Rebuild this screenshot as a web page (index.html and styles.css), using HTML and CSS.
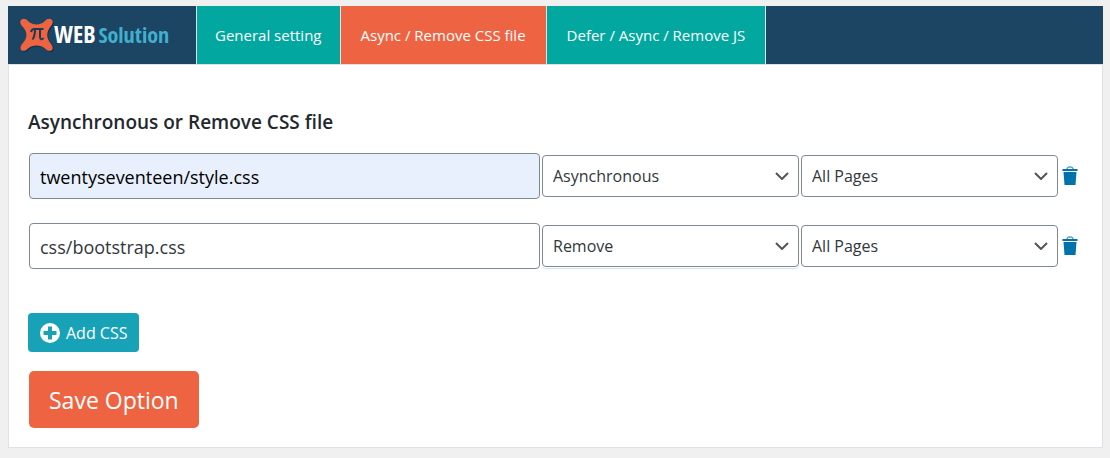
FILE: index.html
```html
<!DOCTYPE html>
<html lang="en">
<head>
<meta charset="utf-8">
<title>Async / Remove CSS file</title>
<link rel="stylesheet" href="styles.css">
</head>
<body>
<header class="topbar">
  <a class="logo" href="#" aria-label="PI WEB Solution">
    <svg class="logo-mark" viewBox="0 0 34 34" aria-hidden="true">
      <path class="logo-shadow" transform="translate(1 1)" d="M1 2C3 0 6 .5 8 3C12 7.500 21 7.500 25 3C27 .5 30 0 32 2C33.500 4 32.500 6 31 8C26 14 26 20 31 26C32.500 28 33.500 30 32 32C30 33.500 27 33 25 30.500C21 26.500 12 26.500 8 30.500C6 33 3 33.500 1 32C0 30 .5 28 2 26C8 20 8 14 2 8C.5 6 -.5 4 1 2Z"/>
      <path class="logo-star" d="M1 2C3 0 6 .5 8 3C12 7.500 21 7.500 25 3C27 .5 30 0 32 2C33.500 4 32.500 6 31 8C26 14 26 20 31 26C32.500 28 33.500 30 32 32C30 33.500 27 33 25 30.500C21 26.500 12 26.500 8 30.500C6 33 3 33.500 1 32C0 30 .5 28 2 26C8 20 8 14 2 8C.5 6 -.5 4 1 2Z"/>
      <path class="logo-pi" d="M11 14C11.500 11.500 12.500 11 14.500 11H23.500M15 11C15 16 14.500 19 12.500 21.500M20 11V19C20 21.500 22 22 23.500 20"/>
    </svg>
    <span class="logo-name"><span class="logo-web">WEB</span><span class="logo-solution">Solution</span></span>
  </a>
  <nav class="tabs">
    <a class="tab" href="#">General setting</a>
    <a class="tab tab-active" href="#" aria-current="page">Async / Remove CSS file</a>
    <a class="tab" href="#">Defer / Async / Remove JS</a>
  </nav>
</header>
<main class="panel">
  <form class="form">
    <h1 class="title">Asynchronous or Remove CSS file</h1>
    <div class="rule">
      <input class="field file autofilled" type="text" value="twentyseventeen/style.css" aria-label="CSS file">
      <select class="field choice" aria-label="Action"><option selected>Asynchronous</option><option>Remove</option></select>
      <select class="field choice" aria-label="Pages"><option>All Pages</option></select>
      <button class="delete" type="button" aria-label="Delete rule">
        <svg viewBox="0 0 16 20" width="16" height="20" aria-hidden="true"><path class="bin-handle" d="M5 3C5 1 6.500 1 8 1S11 1 11 3"/><path class="bin-body" d="M0.500 3H15.500V5H0.500ZM1.500 6H14.500L13.500 19H2.500Z"/></svg>
      </button>
    </div>
    <div class="rule">
      <input class="field file" type="text" value="css/bootstrap.css" aria-label="CSS file">
      <select class="field choice focused" aria-label="Action"><option>Asynchronous</option><option selected>Remove</option></select>
      <select class="field choice" aria-label="Pages"><option>All Pages</option></select>
      <button class="delete" type="button" aria-label="Delete rule">
        <svg viewBox="0 0 16 20" width="16" height="20" aria-hidden="true"><path class="bin-handle" d="M5 3C5 1 6.500 1 8 1S11 1 11 3"/><path class="bin-body" d="M0.500 3H15.500V5H0.500ZM1.500 6H14.500L13.500 19H2.500Z"/></svg>
      </button>
    </div>
    <div class="actions">
      <button class="button add" type="button">
        <svg viewBox="0 0 20 20" width="20" height="20" aria-hidden="true"><circle cx="10" cy="10" r="10" fill="#fff"/><path d="M8 3.500H12V8H16.500V12H12V16.500H8V12H3.500V8H8Z" fill="#17a2b8"/></svg>
        Add CSS
      </button>
      <button class="button save" type="submit">Save Option</button>
    </div>
  </form>
</main>
</body>
</html>
```

FILE: styles.css
```css
* {
  box-sizing: border-box;
}

body {
  margin: 6px 7px 10px 8px;
  background: #f0f0f0;
  color: #23282d;
  font-family: "Open Sans", "Noto Sans", sans-serif;
  font-size: 16px;
}

.topbar {
  display: flex;
  height: 58px;
  background: #1b4563;
}

.logo {
  display: flex;
  align-items: center;
  width: 188px;
  padding-left: 12px;
  font-family: "Open Sans Condensed", "Liberation Sans Narrow", "Open Sans", sans-serif;
  font-weight: 700;
  text-decoration: none;
}

.logo-mark {
  width: 34px;
  height: 34px;
}

.logo-shadow {
  fill: #143047;
}

.logo-star {
  fill: #ee6443;
}

.logo-pi {
  fill: none;
  stroke: #1b3a54;
  stroke-width: 2;
}

.logo-name {
  display: flex;
  align-items: baseline;
  gap: 3px;
  line-height: 32px;
  padding-bottom: 2px;
}

.logo-web {
  color: #fff;
  font-size: 24px;
}

.logo-solution {
  color: #41afcd;
  font-size: 22px;
}

.tabs {
  display: flex;
}

.tab {
  display: flex;
  align-items: center;
  padding: 0 20px;
  border-right: 1px solid #dee2e6;
  background: #02a8a0;
  color: #fff;
  font-size: 15px;
  text-decoration: none;
}

.tab:first-child {
  padding: 0 18px;
  border-left: 1px solid #dee2e6;
}

.tab-active {
  background: #ee6443;
}

.panel {
  padding: 45px 20px 19px 19px;
  border: 1px solid #dee2e6;
  background: #fff;
}

.title {
  margin: 0 0 18px;
  font-size: 19px;
  font-weight: 600;
  line-height: 25px;
}

.rule {
  display: grid;
  grid-template-columns: 511fr 257fr 257fr 22px;
  align-items: center;
  gap: 2px;
  margin-bottom: 24px;
  padding-left: 1px;
}

.field {
  width: 100%;
  min-width: 0;
  border: 1px solid #7e8993;
  border-radius: 4px;
  background-color: #fff;
  color: #32373c;
  font-family: inherit;
}

.file {
  height: 46px;
  padding: 2px 10px 0;
  font-size: 18px;
}

.autofilled {
  background-color: #e8f0fe;
  color: #000;
}

.choice {
  height: 42px;
  padding: 0 24px 0 10px;
  appearance: none;
  background-image: url("data:image/svg+xml,%3Csvg xmlns='http://www.w3.org/2000/svg' viewBox='0 0 14 8'%3E%3Cpath d='M1 1l6 6 6-6' fill='none' stroke='%23555' stroke-width='2'/%3E%3C/svg%3E");
  background-position: right 9px center;
  background-repeat: no-repeat;
  background-size: 14px 8px;
  font-size: 16px;
}

.focused {
  box-shadow: 0 1px 0 #fff, 0 2px 0 #cfe6f5;
}

.delete {
  display: flex;
  padding: 0 0 0 2px;
  border: 0;
  background: none;
}

.bin-handle {
  fill: none;
  stroke: #0073aa;
}

.bin-body {
  fill: #0073aa;
}

.actions {
  display: flex;
  flex-direction: column;
  align-items: flex-start;
  gap: 19px;
  padding-top: 20px;
}

.button {
  border: 0;
  color: #fff;
  font-family: inherit;
}

.add {
  display: flex;
  align-items: center;
  gap: 6px;
  height: 39px;
  padding: 0 12px;
  border-radius: 4px;
  background: #17a2b8;
  font-size: 16px;
}

.save {
  height: 57px;
  margin-left: 1px;
  padding: 0 20px;
  border-radius: 5px;
  background: #ee6443;
  font-size: 23px;
}
```
